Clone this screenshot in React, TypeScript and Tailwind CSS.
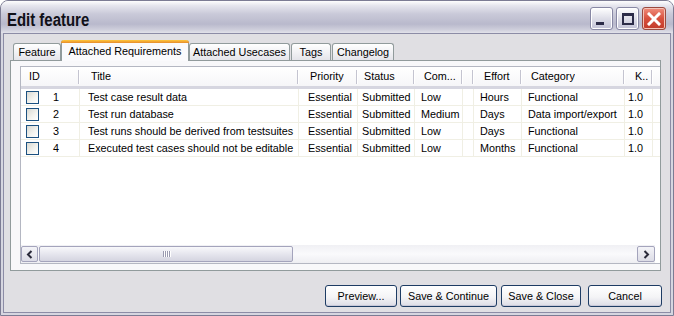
import React from "react";

type Col = { w: string; hp: string; cp: string; label: string };

const cols: Col[] = [
  { w: "w-[59px]", hp: "pl-[8px]", cp: "pl-[5px]", label: "ID" },
  { w: "w-[219px]", hp: "pl-[11px]", cp: "pl-[8px]", label: "Title" },
  { w: "w-[59px]", hp: "pl-[11px]", cp: "pl-[9px]", label: "Priority" },
  { w: "w-[57px]", hp: "pl-[6px]", cp: "pl-[4px]", label: "Status" },
  { w: "w-[48px]", hp: "pl-[9px]", cp: "pl-[6px]", label: "Com..." },
  { w: "w-[11px]", hp: "", cp: "", label: "" },
  { w: "w-[48px]", hp: "pl-[10px]", cp: "pl-[6px]", label: "Effort" },
  { w: "w-[103px]", hp: "pl-[9px]", cp: "pl-[6px]", label: "Category" },
  { w: "w-[28px]", hp: "pl-[10px]", cp: "pl-[3px]", label: "K.." },
];

const rows = [
  ["1", "Test case result data", "Essential", "Submitted", "Low", "", "Hours", "Functional", "1.0"],
  ["2", "Test run database", "Essential", "Submitted", "Medium", "", "Days", "Data import/export", "1.0"],
  ["3", "Test runs should be derived from testsuites", "Essential", "Submitted", "Low", "", "Days", "Functional", "1.0"],
  ["4", "Executed test cases should not be editable", "Essential", "Submitted", "Low", "", "Months", "Functional", "1.0"],
];

function Check() {
  return (
    <span className="inline-block w-[13px] h-[13px] shrink-0 border border-[#1c5180] bg-[linear-gradient(135deg,#d8d8d2,#f4f4f0_60%,#ffffff)]" />
  );
}

function Arrow({ dir }: { dir: "left" | "right" }) {
  return (
    <svg width="8" height="9" viewBox="0 0 8 9">
      <polyline
        points={dir === "left" ? "5.5,1 2,4.5 5.5,8" : "2.5,1 6,4.5 2.5,8"}
        fill="none"
        stroke="#2a2a3a"
        strokeWidth="2"
      />
    </svg>
  );
}

const tabBase =
  "flex items-center justify-center border border-b-0 border-[#919b9c] rounded-t-[3px] h-[17px] bg-[linear-gradient(#ffffff,#f2f2f5_50%,#e4e4ea)]";

export default function App() {
  return (
    <div className="w-[674px] h-[316px] flex flex-col bg-[#d6d6e0] border border-[#7c7c94] rounded-t-[8px] overflow-hidden font-['Liberation_Sans',Tahoma,sans-serif] text-[10.8px] text-black">
      {/* title bar */}
      <div className="h-[32px] flex items-start justify-between pl-[6px] pr-[7px] bg-[linear-gradient(#fefefe,#e6e6ee_14%,#cacad9_40%,#b9b9cc_72%,#cfcfdc_90%,#e2e2ea)]">
        <span className="mt-[8px] inline-block origin-left scale-x-[0.83] leading-[22px] text-[18px] font-bold text-[#101018] font-['Liberation_Sans',sans-serif]">
          Edit feature
        </span>
        <div className="flex gap-[3px] mt-[6px]">
          <div className="w-[23px] h-[23px] rounded-[3px] border border-[#8888a4] shadow-[inset_0_0_0_1px_#ffffff] bg-[linear-gradient(#ffffff,#dedee8_50%,#c2c2d6)] flex items-end pl-[5px] pb-[4px]">
            <span className="w-[8px] h-[3px] bg-[#2c2c48]" />
          </div>
          <div className="w-[23px] h-[23px] rounded-[3px] border border-[#8888a4] shadow-[inset_0_0_0_1px_#ffffff] bg-[linear-gradient(#ffffff,#dedee8_50%,#c2c2d6)] flex items-center justify-center">
            <span className="w-[12px] h-[12px] border-[2px] border-t-[3px] border-[#2c2c48]" />
          </div>
          <div className="w-[24px] h-[23px] rounded-[3px] border border-[#9a4a40] shadow-[inset_0_0_0_1px_#f4c4b8] bg-[linear-gradient(#f08e7e,#d8503e_50%,#c23a2a)] flex items-center justify-center">
            <svg width="14" height="14" viewBox="0 0 14 14">
              <path d="M2 2 L12 12 M12 2 L2 12" stroke="#ffffff" strokeWidth="3" strokeLinecap="square" />
            </svg>
          </div>
        </div>
      </div>

      {/* client area */}
      <div className="flex-1 mx-[2px] mb-[2px] border border-[#8c8ca6] bg-[#e0dfe3] flex flex-col pt-[6px]">
        {/* tabs */}
        <div className="ml-[6px] h-[20px] flex items-end pl-[3px]">
          <div className={`${tabBase} w-[48px]`}>Feature</div>
          <div className="relative z-10 -mb-[1px] w-[128px] h-[21px] flex flex-col border-x border-[#919b9c] rounded-t-[3px] bg-[#fafafc]">
            <span className="h-[3px] rounded-t-[3px] -mx-px bg-[linear-gradient(#ffc83c,#e68b2c)]" />
            <span className="flex-1 flex items-center justify-center pb-[1px]">Attached Requirements</span>
          </div>
          <div className={`${tabBase} w-[101px]`}>Attached Usecases</div>
          <div className={`${tabBase} w-[40px] ml-[1px]`}>Tags</div>
          <div className={`${tabBase} w-[62px] ml-[1px]`}>Changelog</div>
        </div>

        {/* tab panel */}
        <div className="ml-[6px] w-[651px] h-[211px] border border-[#919b9c] bg-[#f8f8fa] pl-[9px] pt-[5px]">
          <div className="w-[640px] h-[198px] border border-[#b4b7c2] border-r-0 bg-white flex flex-col">
            {/* header */}
            <div className="flex h-[22px] border-b-[3px] border-[#d6d6e0] bg-[linear-gradient(#ffffff,#f6f6f8)]">
              {cols.map((c, i) => (
                <div key={i} className={`${c.w} shrink-0 flex items-center justify-between ${c.hp}`}>
                  <span className="whitespace-nowrap overflow-hidden">{c.label}</span>
                  <span className="w-[2px] h-[14px] border-l border-[#c4c4d0] border-r border-r-white" />
                </div>
              ))}
            </div>
            {/* rows */}
            {rows.map((r, ri) => (
              <div key={ri} className="flex h-[17px] border-b border-[#f0efe4]">
                {cols.map((c, i) => (
                  <div
                    key={i}
                    className={`${c.w} shrink-0 flex items-center border-r border-[#f0efe4] whitespace-nowrap overflow-hidden ${c.cp}`}
                  >
                    {i === 0 ? (
                      <>
                        <Check />
                        <span className="ml-[14px]">{r[0]}</span>
                      </>
                    ) : (
                      r[i]
                    )}
                  </div>
                ))}
              </div>
            ))}
            <div className="flex-1" />
            {/* horizontal scrollbar */}
            <div className="h-[18px] w-[634px] flex items-stretch gap-[1px] bg-[linear-gradient(#f0f0f4,#fafafc_50%,#eeeef2)] py-[1px]">
              <div className="w-[17px] rounded-[2px] border border-[#a4a4bc] bg-[linear-gradient(#f4f4f8,#dcdce6)] flex items-center justify-center">
                <Arrow dir="left" />
              </div>
              <div className="w-[254px] rounded-[2px] border border-[#a4a4bc] bg-[linear-gradient(#f8f8fb,#e6e6ee_50%,#d4d4e0)] flex items-center justify-center">
                <div className="flex gap-[1px]">
                  {[0, 1, 2, 3].map((k) => (
                    <span key={k} className="w-px h-[6px] bg-[#9a9ab0] shadow-[1px_0_0_#ffffff]" />
                  ))}
                </div>
              </div>
              <div className="flex-1" />
              <div className="w-[18px] rounded-[2px] border border-[#a4a4bc] bg-[linear-gradient(#f4f4f8,#dcdce6)] flex items-center justify-center">
                <Arrow dir="right" />
              </div>
            </div>
          </div>
        </div>

        {/* buttons */}
        <div className="mt-[14px] flex justify-end pr-[8px]">
          {[
            { t: "Preview...", w: "w-[72px]", m: "" },
            { t: "Save & Continue", w: "w-[97px]", m: "ml-[3px]" },
            { t: "Save & Close", w: "w-[80px]", m: "ml-[4px]" },
            { t: "Cancel", w: "w-[74px]", m: "ml-[7px]" },
          ].map((b) => (
            <button
              key={b.t}
              className={`${b.w} ${b.m} h-[22px] rounded-[3px] border border-[#1e3c64] bg-[linear-gradient(#ffffff,#f4f4f6_55%,#dcdce6)] shadow-[inset_0_-1px_0_#c8c8d8] flex items-center justify-center`}
            >
              {b.t}
            </button>
          ))}
        </div>
      </div>
    </div>
  );
}
